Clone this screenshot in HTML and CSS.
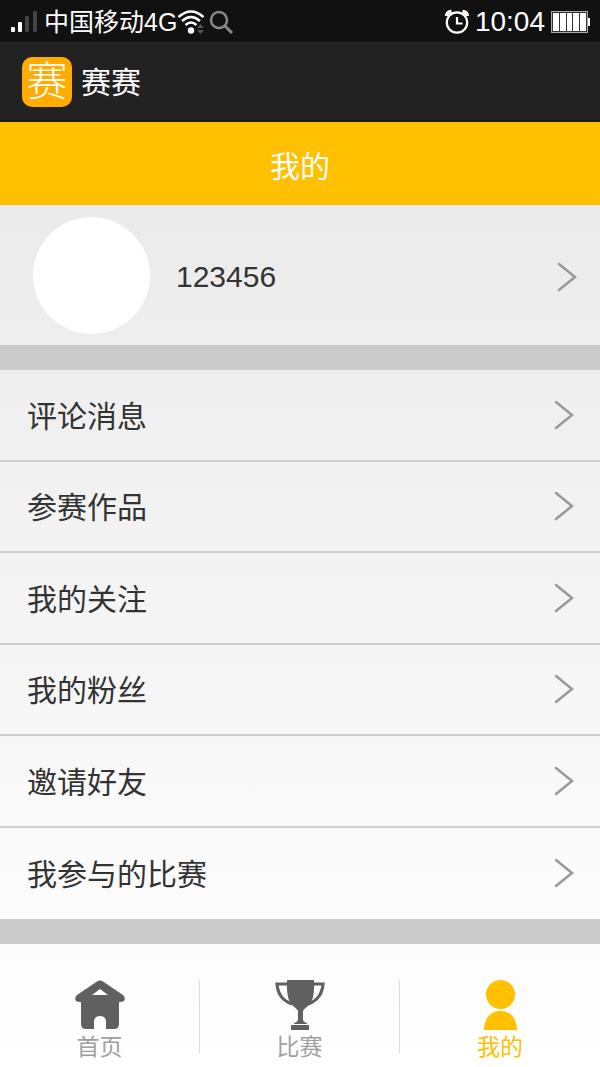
FILE: index.html
```html
<!DOCTYPE html>
<html lang="zh-CN">

<head>
    <meta charset="UTF-8">
    <meta name="viewport" content="width=device-width, initial-scale=1.0">
    <title>赛赛</title>
    <link rel="stylesheet" href="styles.css">
</head>

<body>
    <!-- Shared icons -->
    <svg class="sprite" aria-hidden="true">
        <symbol id="arrow" viewBox="0 0 20 30">
            <path d="M2 2L18 15L2 28" fill="none" stroke="currentColor" stroke-width="2.500" stroke-linecap="round" />
        </symbol>
    </svg>

    <!-- Phone status bar -->
    <div class="status-bar">
        <div class="status-group">
            <svg class="signal" width="28" height="24" viewBox="0 0 28 24">
                <rect x="1" y="17" width="4" height="5" rx="1" fill="#fff" />
                <rect x="8" y="12" width="4" height="10" rx="1" fill="#fff" />
                <rect x="15" y="6" width="4" height="16" rx="1" fill="#444" />
                <rect x="23" y="1" width="4" height="21" rx="1" fill="#444" />
            </svg>
            <span class="carrier">中国移动4G</span>
            <svg width="28" height="26" viewBox="0 0 28 26">
                <g fill="none" stroke="#fff" stroke-width="2.4">
                    <path d="M1.500 8Q14 -3 26.500 8" />
                    <path d="M5 12Q14 4 23 12" />
                    <path d="M8.500 16Q14 11 19.500 16" />
                </g>
                <circle cx="14" cy="21.500" r="3.200" fill="#fff" />
                <path d="M20 19L23.500 15L27 19zM20 21L23.500 25L27 21z" fill="#555" />
            </svg>
            <svg class="search" width="25" height="25" viewBox="0 0 25 25" fill="none" stroke="#888">
                <circle cx="10" cy="10" r="8" stroke-width="2.500" />
                <path d="M16 16L23 23" stroke-width="3" />
            </svg>
        </div>
        <div class="status-group">
            <svg width="26" height="26" viewBox="0 0 26 26" fill="none" stroke="#fff">
                <circle cx="13" cy="13.500" r="10.200" stroke-width="2.200" />
                <path d="M13 8V14.500H18.500" stroke-width="2.200" />
                <path d="M2.500 7Q3 3 7.500 2.500M18.500 2.500Q23 3 23.500 7" stroke-width="3.500" />
            </svg>
            <span class="clock">10:04</span>
            <svg class="battery" width="39" height="22" viewBox="0 0 39 22">
                <rect x="0.500" y="0.500" width="36" height="21" fill="#333" stroke="#aaa" />
                <path d="M2 2H8V20H2zM9 2H15V20H9zM16 2H21V20H16zM22 2H28V20H22zM29 2H35V20H29z" fill="#fff" />
                <rect x="37" y="7" width="2" height="8" fill="#fff" />
            </svg>
        </div>
    </div>

    <header class="app-bar">
        <span class="logo">赛</span>
        <span class="app-name">赛赛</span>
    </header>

    <h1 class="page-title">我的</h1>

    <!-- User profile -->
    <a href="#profile" class="profile">
        <span class="avatar"></span>
        <span class="user-name label">123456</span>
        <svg class="arrow"><use href="#arrow" /></svg>
    </a>

    <!-- Menu -->
    <nav class="menu">
        <a href="#comments"><span class="label">评论消息</span><svg class="arrow"><use href="#arrow" /></svg></a>
        <a href="#works"><span class="label">参赛作品</span><svg class="arrow"><use href="#arrow" /></svg></a>
        <a href="#following"><span class="label">我的关注</span><svg class="arrow"><use href="#arrow" /></svg></a>
        <a href="#fans"><span class="label">我的粉丝</span><svg class="arrow"><use href="#arrow" /></svg></a>
        <a href="#invite"><span class="label">邀请好友</span><svg class="arrow"><use href="#arrow" /></svg></a>
        <a href="#matches"><span class="label">我参与的比赛</span><svg class="arrow"><use href="#arrow" /></svg></a>
    </nav>

    <!-- Bottom tabs -->
    <nav class="tabs">
        <a href="#home">
            <svg class="tab-icon" viewBox="0 0 50 50" fill="#606060">
                <path fill-rule="evenodd" d="M22 1.500Q25 -0.500 28 1.500L48 15Q51 18 49 21Q48 22 44 22V44Q44 49 39 49H31V42Q31 36 25 36Q19 36 19 42V49H11Q6 49 6 44V22Q2 22 1 21Q-1 18 2 15zM25 9L17 15H33z" />
            </svg>
            首页
        </a>
        <a href="#match">
            <svg class="tab-icon" viewBox="0 0 50 50" fill="#606060">
                <path d="M12 0H39Q40 19 34 25Q28 30 28 31V39Q28 42 32 43V44H19V43Q23 42 23 39V31Q23 30 17 25Q11 19 12 0zM16 45H34V50H16z" />
                <path d="M13 4H2Q3 19 17 24M37 4H48Q47 19 33 24" fill="none" stroke="#606060" stroke-width="3.200" />
            </svg>
            比赛
        </a>
        <a href="#mine" class="active">
            <svg class="tab-icon" viewBox="0 0 50 50" fill="currentColor">
                <circle cx="25.500" cy="14.500" r="14.500" />
                <path d="M9 50C9 39 15 31 25.500 31S42 39 42 50z" />
            </svg>
            我的
        </a>
    </nav>
</body>

</html>
```

FILE: styles.css
```css
* {
    box-sizing: border-box;
}

body {
    margin: 0;
    min-height: 100vh;
    display: flex;
    flex-direction: column;
    font-family: "Liberation Sans", "Noto Sans CJK SC", sans-serif;
    font-size: 30px;
    color: #333;
    background: linear-gradient(#e8e8e8, #ebebeb 20%, #fcfcfc 88%, #fff);
}

a {
    color: inherit;
    text-decoration: none;
}

svg {
    flex-shrink: 0;
}

.sprite {
    position: absolute;
    width: 0;
    height: 0;
}

.status-bar {
    display: flex;
    justify-content: space-between;
    align-items: center;
    height: 42px;
    padding: 2px 10px 0;
    background-color: #111;
    color: #fff;
}

.status-group {
    display: flex;
    align-items: center;
}

.carrier {
    margin-left: 6px;
    font-size: 25px;
    line-height: 40px;
}

.search {
    margin-left: 4px;
}

.clock {
    margin: 0 6px 0 5px;
    font-size: 28px;
    line-height: 40px;
}

.app-bar {
    display: flex;
    align-items: center;
    gap: 9px;
    height: 80px;
    padding: 0 22px;
    background-color: #222;
    border-top: 1px solid #2c2c2c;
    border-bottom: 2px solid #1a1a1a;
    color: #fff;
}

.logo {
    width: 50px;
    height: 50px;
    border-radius: 10px;
    background-color: #ffab00;
    font-size: 41px;
    line-height: 50px;
    font-weight: 300;
    text-align: center;
}

.app-name {
    padding-top: 2px;
    line-height: 40px;
}

.page-title {
    margin: 0;
    padding-top: 6px;
    background-color: #ffc000;
    color: #fff;
    font-size: 30px;
    font-weight: normal;
    line-height: 77px;
    text-align: center;
}

.profile {
    display: flex;
    align-items: center;
    height: 140px;
    padding: 0 23px 0 33px;
}

.avatar {
    width: 117px;
    height: 117px;
    border-radius: 50%;
    background-color: #fff;
}

.user-name {
    margin-left: 26px;
}

.label {
    padding-top: 4px;
}

.arrow {
    width: 20px;
    height: 30px;
    margin-left: auto;
    color: #999;
}

.profile .arrow {
    margin-top: 4px;
}

.menu {
    flex: 1;
    display: grid;
    grid-auto-rows: 1fr;
    border-top: 25px solid #cbcbcb;
    border-bottom: 25px solid #cbcbcb;
}

.menu a {
    display: flex;
    align-items: center;
    padding: 0 26px 0 27px;
    line-height: 80px;
    border-bottom: 2px solid #cecece;
}

.menu a:last-child {
    border-bottom: none;
}

/* Bottom tabs */
.tabs {
    display: grid;
    grid-template-columns: repeat(3, 1fr);
    padding: 36px 0 14px;
}

.tabs a {
    display: flex;
    flex-direction: column;
    align-items: center;
    height: 73px;
    font-size: 23px;
    line-height: 34px;
    color: #a0a0a0;
    border-right: 1px solid #ddd;
}

.tabs a:last-child {
    border-right: none;
}

.tabs .active {
    color: #ffc000;
}

.tab-icon {
    width: 50px;
    height: 50px;
}
```
